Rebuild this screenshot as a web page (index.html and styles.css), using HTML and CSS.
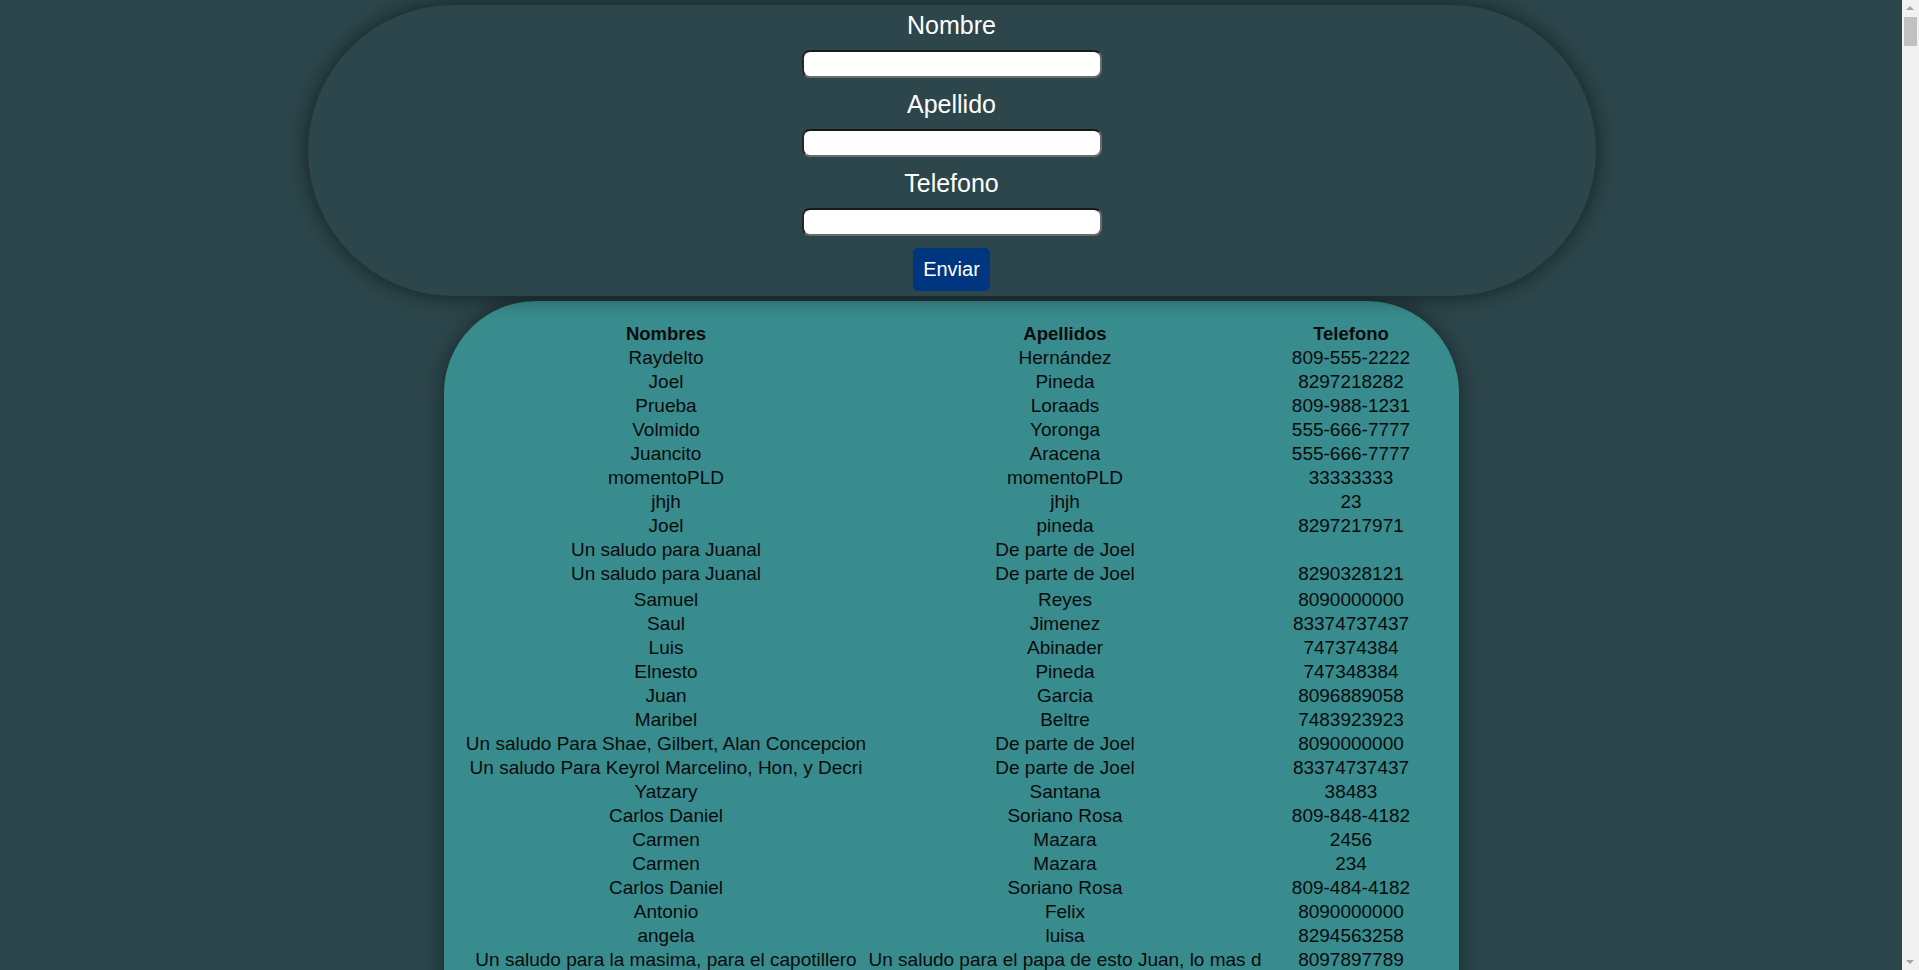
FILE: index.html
```html
<!DOCTYPE html>
<html lang="es">
<head>
<meta charset="utf-8">
<title>Contactos</title>
<link rel="stylesheet" href="styles.css">
</head>
<body>
<form class="form-card">
  <label class="field-label" for="nombre">Nombre</label>
  <input class="field-input" id="nombre" type="text">
  <label class="field-label" for="apellido">Apellido</label>
  <input class="field-input" id="apellido" type="text">
  <label class="field-label" for="telefono">Telefono</label>
  <input class="field-input" id="telefono" type="text">
  <button class="send-btn" type="button">Enviar</button>
</form>
<section class="table-card">
  <table class="contacts">
    <colgroup><col class="c1"><col class="c2"><col class="c3"></colgroup>
    <thead>
      <tr><th>Nombres</th><th>Apellidos</th><th>Telefono</th></tr>
    </thead>
    <tbody>
      <tr><td>Raydelto</td><td>Hernández</td><td>809-555-2222</td></tr>
      <tr><td>Joel</td><td>Pineda</td><td>8297218282</td></tr>
      <tr><td>Prueba</td><td>Loraads</td><td>809-988-1231</td></tr>
      <tr><td>Volmido</td><td>Yoronga</td><td>555-666-7777</td></tr>
      <tr><td>Juancito</td><td>Aracena</td><td>555-666-7777</td></tr>
      <tr><td>momentoPLD</td><td>momentoPLD</td><td>33333333</td></tr>
      <tr><td>jhjh</td><td>jhjh</td><td>23</td></tr>
      <tr><td>Joel</td><td>pineda</td><td>8297217971</td></tr>
      <tr><td>Un saludo para Juanal</td><td>De parte de Joel</td><td></td></tr>
      <tr class="tall"><td>Un saludo para Juanal</td><td>De parte de Joel</td><td>8290328121</td></tr>
      <tr><td>Samuel</td><td>Reyes</td><td>8090000000</td></tr>
      <tr><td>Saul</td><td>Jimenez</td><td>83374737437</td></tr>
      <tr><td>Luis</td><td>Abinader</td><td>747374384</td></tr>
      <tr><td>Elnesto</td><td>Pineda</td><td>747348384</td></tr>
      <tr><td>Juan</td><td>Garcia</td><td>8096889058</td></tr>
      <tr><td>Maribel</td><td>Beltre</td><td>7483923923</td></tr>
      <tr><td>Un saludo Para Shae, Gilbert, Alan Concepcion</td><td>De parte de Joel</td><td>8090000000</td></tr>
      <tr><td>Un saludo Para Keyrol Marcelino, Hon, y Decri</td><td>De parte de Joel</td><td>83374737437</td></tr>
      <tr><td>Yatzary</td><td>Santana</td><td>38483</td></tr>
      <tr><td>Carlos Daniel</td><td>Soriano Rosa</td><td>809-848-4182</td></tr>
      <tr><td>Carmen</td><td>Mazara</td><td>2456</td></tr>
      <tr><td>Carmen</td><td>Mazara</td><td>234</td></tr>
      <tr><td>Carlos Daniel</td><td>Soriano Rosa</td><td>809-484-4182</td></tr>
      <tr><td>Antonio</td><td>Felix</td><td>8090000000</td></tr>
      <tr><td>angela</td><td>luisa</td><td>8294563258</td></tr>
      <tr><td>Un saludo para la masima, para el capotillero</td><td>Un saludo para el papa de esto Juan, lo mas d</td><td>8097897789</td></tr>
    </tbody>
  </table>
</section>
<div class="scrollbar" aria-hidden="true">
  <span class="sb-arrow sb-up"></span>
  <span class="sb-thumb"></span>
  <span class="sb-arrow sb-down"></span>
</div>
</body>
</html>
```

FILE: styles.css
```css
body {
  margin: 0;
  padding-right: 16px;
  background: #2c464b;
  font-family: "Liberation Sans", Arial, sans-serif;
}

.form-card {
  width: 1288px;
  height: 291px;
  box-sizing: border-box;
  margin: 5px auto 0;
  padding-top: 6px;
  display: flex;
  flex-direction: column;
  align-items: center;
  background: #2c464b;
  border-radius: 150px;
  box-shadow: 0 0 22px rgba(0, 0, 0, 0.55);
  position: relative;
  z-index: 1;
}

.field-label {
  color: #ffffff;
  font-size: 25px;
  line-height: 28px;
  margin-bottom: 11px;
}

.field-input {
  width: 300px;
  height: 28px;
  box-sizing: border-box;
  margin: 0 0 12px;
  border: 2px solid #6c6c6c;
  border-top-color: #1a1a1a;
  border-left-color: #262626;
  border-radius: 8px;
  background: #ffffff;
  font-family: "Liberation Sans", Arial, sans-serif;
  font-size: 16px;
}

.send-btn {
  height: 43px;
  padding: 0 10px;
  border: none;
  border-radius: 5px;
  background: #003580;
  color: #ffffff;
  font-family: "Liberation Sans", Arial, sans-serif;
  font-size: 20px;
}

.table-card {
  width: 1015px;
  box-sizing: border-box;
  margin: 5px auto 0;
  padding: 21px 19px 140px 20px;
  background: #388c8e;
  border-radius: 92px;
  box-shadow: 0 0 22px rgba(0, 0, 0, 0.45);
}

.contacts {
  width: 100%;
  table-layout: fixed;
  border-collapse: separate;
  border-spacing: 0;
  color: #0b0b0b;
  font-size: 19px;
  line-height: 22px;
}

.c1 { width: 404px; }
.c2 { width: 394px; }
.c3 { width: 178px; }

.contacts th,
.contacts td {
  padding: 1px 0;
  text-align: center;
  white-space: nowrap;
}

.contacts th {
  font-weight: bold;
  font-size: 18.5px;
}

.contacts .tall td {
  padding-bottom: 3px;
}

.scrollbar {
  position: fixed;
  top: 0;
  right: 0;
  width: 17px;
  height: 100%;
  background: #f1f1f1;
  z-index: 5;
}

.sb-arrow {
  position: absolute;
  left: 4px;
  width: 0;
  height: 0;
  border-left: 4px solid transparent;
  border-right: 4px solid transparent;
}

.sb-up {
  top: 6px;
  border-bottom: 4px solid #a3a3a3;
}

.sb-down {
  bottom: 6px;
  border-top: 4px solid #a3a3a3;
}

.sb-thumb {
  position: absolute;
  top: 17px;
  left: 2px;
  width: 13px;
  height: 29px;
  background: #c1c1c1;
}
```
